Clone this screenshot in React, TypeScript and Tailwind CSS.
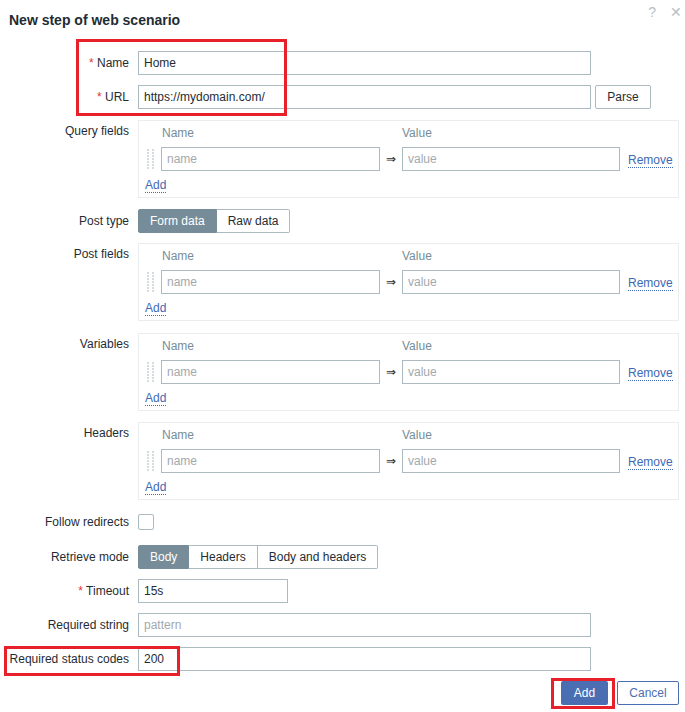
import React from 'react';

const textDark = 'text-[#1f2c33]';
const labelCls = `w-[129px] shrink-0 text-right ${textDark}`;
const inputCls =
  'h-[24px] border border-[#acbbc2] bg-white px-[5px] text-[12px] text-[#1f2c33] outline-none placeholder:text-[#a3a9ad]';
const linkCls = 'text-[#4069b3] border-b border-dotted border-[#4069b3] leading-[14px]';

function Req({ children }: { children: React.ReactNode }) {
  return (
    <>
      <span className="text-[#e33734]">*</span> {children}
    </>
  );
}

function DragHandle() {
  const rows = [0, 3, 6, 9, 12, 15, 18];
  return (
    <svg width="7" height="20" viewBox="0 0 7 20">
      {rows.map((y) => (
        <g key={y} fill="#d6dbde">
          <rect x="0" y={y} width="2" height="2" />
          <rect x="5" y={y} width="2" height="2" />
        </g>
      ))}
    </svg>
  );
}

function PairTable({ label, className }: { label: string; className: string }) {
  return (
    <div className={`flex items-start ${className}`}>
      <div className={`${labelCls} pt-[4px] leading-[14px]`}>{label}</div>
      <div className="ml-[9px] h-[78px] w-[541px] border border-[#ebeef0] bg-white">
        {/* header row */}
        <div className="mt-[3px] flex h-[18px] items-center leading-[18px] text-[#768d99]">
          <div className="w-[22px]" />
          <div className="w-[219px] pl-[1px]">Name</div>
          <div className="w-[22px]" />
          <div>Value</div>
        </div>
        {/* field row */}
        <div className="mt-[5px] flex h-[24px] items-center">
          <div className="flex w-[22px] pl-[8px]">
            <DragHandle />
          </div>
          <input className={`${inputCls} w-[219px]`} placeholder="name" readOnly />
          <div className="w-[22px] text-center text-[#1f2c33]">⇒</div>
          <input className={`${inputCls} w-[218px]`} placeholder="value" readOnly />
          <span className={`ml-[8px] mt-[2px] ${linkCls}`}>Remove</span>
        </div>
        <div className="mt-[4px] flex h-[18px] items-center pl-[6px]">
          <span className={`mt-[2px] ${linkCls}`}>Add</span>
        </div>
      </div>
    </div>
  );
}

function Segmented({ items }: { items: string[] }) {
  return (
    <div className="flex h-[24px]">
      {items.map((it, i) => (
        <div
          key={it}
          className={
            i === 0
              ? 'flex items-center rounded-l-[2px] border border-[#768d99] bg-[#768d99] px-[11px] text-white'
              : `flex items-center border border-l-0 border-[#acbbc2] bg-white px-[11px] ${textDark} ${
                  i === items.length - 1 ? 'rounded-r-[2px]' : ''
                }`
          }
        >
          {it}
        </div>
      ))}
    </div>
  );
}

export default function App() {
  return (
    <div
      className="relative h-[712px] w-[685px] overflow-hidden bg-white text-[12px]"
      style={{ fontFamily: '"Liberation Sans", Arial, sans-serif' }}
    >
      {/* Header */}
      <div className="flex h-[40px] items-start justify-between">
        <h1 className="ml-[9px] mt-[11px] text-[14px] font-bold leading-[18px] text-[#1f2c33]">
          New step of web scenario
        </h1>
        <div className="mr-[3px] mt-[4px] flex gap-[14px] text-[14px] leading-[16px] text-[#b5c0c6]">
          <span>?</span>
          <span>✕</span>
        </div>
      </div>

      {/* Form */}
      <div className="flex flex-col">
        <div className="mt-[11px] flex items-center">
          <div className={labelCls}>
            <Req>Name</Req>
          </div>
          <input className={`${inputCls} ml-[9px] w-[453px]`} defaultValue="Home" readOnly />
        </div>

        <div className="mt-[10px] flex items-center">
          <div className={labelCls}>
            <Req>URL</Req>
          </div>
          <input
            className={`${inputCls} ml-[9px] w-[453px]`}
            defaultValue="https://mydomain.com/"
            readOnly
          />
          <button className="ml-[4px] h-[24px] w-[56px] rounded-[2px] border border-[#acbbc2] bg-white text-[#1f2c33]">
            Parse
          </button>
        </div>

        <PairTable label="Query fields" className="mt-[11px]" />

        <div className="mt-[11px] flex items-center">
          <div className={labelCls}>Post type</div>
          <div className="ml-[9px]">
            <Segmented items={['Form data', 'Raw data']} />
          </div>
        </div>

        <PairTable label="Post fields" className="mt-[10px]" />
        <PairTable label="Variables" className="mt-[12px]" />
        <PairTable label="Headers" className="mt-[11px]" />

        <div className="mt-[10px] flex h-[24px] items-center">
          <div className={labelCls}>Follow redirects</div>
          <div className="ml-[9px] h-[16px] w-[16px] rounded-[2px] border border-[#acbbc2] bg-white" />
        </div>

        <div className="mt-[11px] flex items-center">
          <div className={labelCls}>Retrieve mode</div>
          <div className="ml-[9px]">
            <Segmented items={['Body', 'Headers', 'Body and headers']} />
          </div>
        </div>

        <div className="mt-[10px] flex items-center">
          <div className={labelCls}>
            <Req>Timeout</Req>
          </div>
          <input className={`${inputCls} ml-[9px] w-[150px]`} defaultValue="15s" readOnly />
        </div>

        <div className="mt-[10px] flex items-center">
          <div className={labelCls}>Required string</div>
          <input className={`${inputCls} ml-[9px] w-[453px]`} placeholder="pattern" readOnly />
        </div>

        <div className="mt-[10px] flex items-center">
          <div className={labelCls}>Required status codes</div>
          <input className={`${inputCls} ml-[9px] w-[453px]`} defaultValue="200" readOnly />
        </div>

        <div className="mr-[6px] mt-[10px] flex justify-end gap-[9px]">
          <button className="h-[24px] w-[47px] rounded-[2px] bg-[#4b6eb3] text-white">Add</button>
          <button className="h-[24px] w-[62px] rounded-[2px] border border-[#4b6eb3] bg-white text-[#4b6eb3]">
            Cancel
          </button>
        </div>
      </div>

      {/* Red annotation frames */}
      <div className="pointer-events-none absolute left-[76px] top-[39px] h-[77px] w-[211px] border-[3px] border-[#e8202a]" />
      <div className="pointer-events-none absolute left-[4px] top-[646px] h-[30px] w-[176px] border-[3px] border-[#e8202a]" />
      <div className="pointer-events-none absolute left-[551px] top-[678px] h-[31px] w-[64px] border-[3px] border-[#e8202a]" />
    </div>
  );
}
